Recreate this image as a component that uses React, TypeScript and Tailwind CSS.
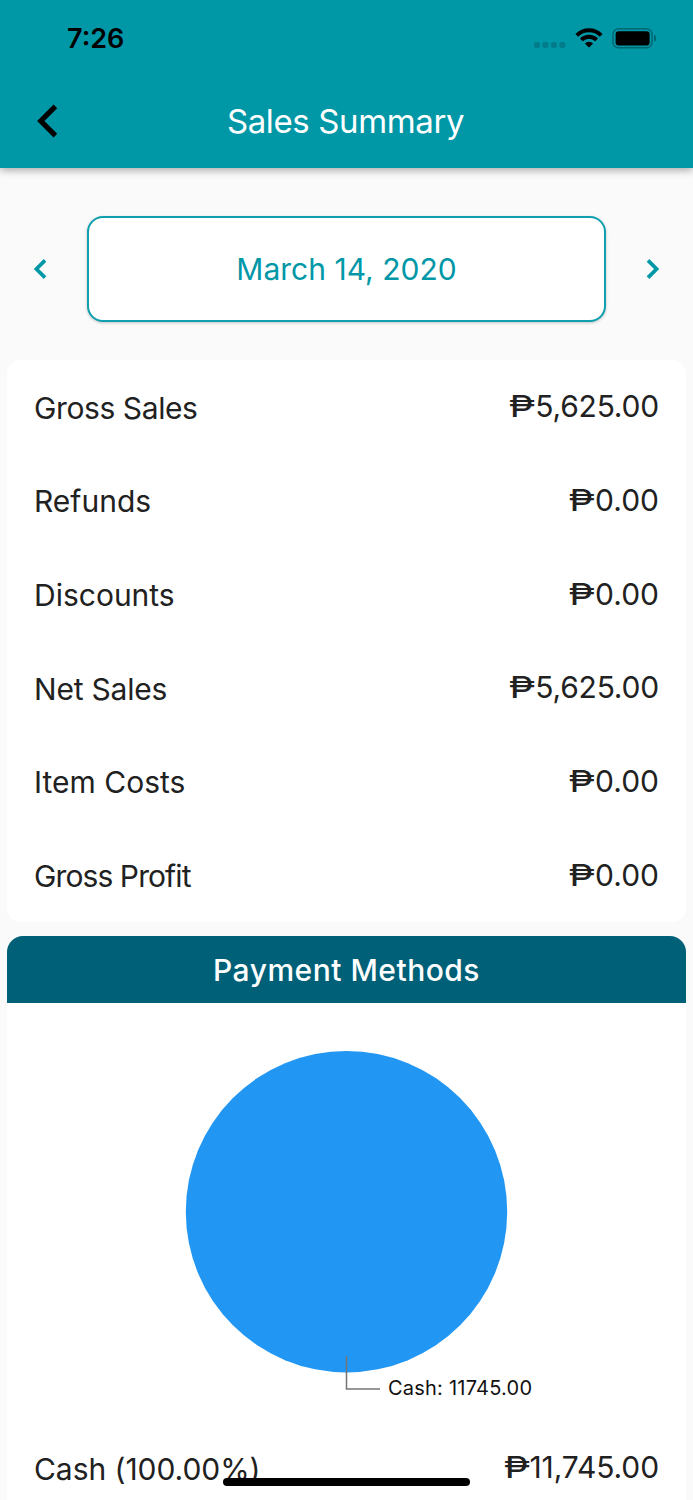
import { clsx } from 'clsx';

interface SummaryRow {
  label: string;
  amount: string;
  labelClass: string;
  amountClass: string;
}

const rows: SummaryRow[] = [
  { label: 'Gross Sales', amount: '5,625.00', labelClass: 'tracking-[-0.4px]', amountClass: 'tracking-[-0.2px]' },
  { label: 'Refunds', amount: '0.00', labelClass: 'tracking-[0px]', amountClass: 'tracking-[0px]' },
  { label: 'Discounts', amount: '0.00', labelClass: 'tracking-[0px]', amountClass: 'tracking-[0px]' },
  { label: 'Net Sales', amount: '5,625.00', labelClass: 'tracking-[-0.2px]', amountClass: 'tracking-[-0.2px]' },
  { label: 'Item Costs', amount: '0.00', labelClass: 'tracking-[0px]', amountClass: 'tracking-[0px]' },
  { label: 'Gross Profit', amount: '0.00', labelClass: 'tracking-[-0.9px]', amountClass: 'tracking-[0px]' },
];

const cashRow: SummaryRow = {
  label: 'Cash (100.00%)',
  amount: '11,745.00',
  labelClass: 'tracking-[-0.05px]',
  amountClass: 'tracking-[-0.1px]',
};

const StatusBar = () => (
  <div className="flex h-[76px] items-center justify-between pl-[67px] pr-[36px]">
    <span className="text-[27px] font-semibold leading-none text-black">7:26</span>
    <div className="flex items-center">
      <svg width="32" height="6" viewBox="0 0 32 6" className="mt-[14px] fill-[#007c8a]">
        <rect x="0" y="0" width="6" height="6" rx="2" />
        <rect x="8.5" y="0" width="6" height="6" rx="2" />
        <rect x="17" y="0" width="6" height="6" rx="2" />
        <rect x="25.3" y="0" width="6" height="6" rx="2" />
      </svg>
      <svg width="28" height="20" viewBox="0 0 28 20" className="ml-[9px]" fill="none" stroke="#000" strokeWidth="4">
        <path d="M1.8 7.3A17.3 17.3 0 0 1 26.2 7.3" />
        <path d="M6.4 11.9A10.8 10.8 0 0 1 21.6 11.9" />
        <path d="M14 19.5l-4.1-4.1a5.8 5.8 0 0 1 8.2 0z" fill="#000" stroke="none" />
      </svg>
      <svg width="45" height="21" viewBox="0 0 45 21" className="ml-[9px]">
        <rect x="1" y="0.8" width="39" height="19" rx="5.5" fill="none" stroke="#036773" strokeWidth="1.5" />
        <rect x="3.6" y="3.2" width="34" height="14.2" rx="3" fill="#000" />
        <path d="M42 6.7c3 1 3 6 0 7z" fill="#036773" />
      </svg>
    </div>
  </div>
);

const Header = () => (
  <header className="relative h-[167.5px] shrink-0 bg-[#0097a7] shadow-[0_2px_8px_rgba(0,0,0,0.35)]">
    <StatusBar />
    <div className="grid h-[90px] grid-cols-[100px_1fr_102px] items-center">
      <button type="button" aria-label="Back" className="pl-[37px]">
        <svg width="21" height="34" viewBox="0 0 21 34" fill="none" stroke="#000" strokeWidth="5.2">
          <path d="M18.4 2.4L3.8 17l14.6 14.6" />
        </svg>
      </button>
      <h1 className="whitespace-nowrap text-center text-[33px] leading-none tracking-[-0.38px] text-white">
        Sales Summary
      </h1>
    </div>
  </header>
);

const DatePicker = () => (
  <div className="mt-[48.5px] flex h-[105.5px] items-center justify-between px-[33px]">
    <button type="button" aria-label="Previous day">
      <svg width="14" height="22" viewBox="0 0 14 22" fill="none" stroke="#0097a7" strokeWidth="3.7">
        <path d="M12 2.4L3.4 11l8.6 8.6" />
      </svg>
    </button>
    <div className="flex h-[105.5px] w-[519px] items-center justify-center rounded-[16px] border-2 border-[#0f9fae] bg-white pt-[1px] text-[30px] tracking-[0.02px] text-[#0097a7] shadow-[0_1px_3px_rgba(0,0,0,0.22)]">
      March 14, 2020
    </div>
    <button type="button" aria-label="Next day">
      <svg width="14" height="22" viewBox="0 0 14 22" fill="none" stroke="#0097a7" strokeWidth="3.7">
        <path d="M2 2.4L10.6 11 2 19.6" />
      </svg>
    </button>
  </div>
);

const Row = ({ row }: { row: SummaryRow }) => (
  <div className="flex h-[93.67px] items-center justify-between px-[27px] text-[30px] text-[#212121]">
    <span className={clsx('whitespace-nowrap pt-[3px]', row.labelClass)}>{row.label}</span>
    <span className={clsx('whitespace-nowrap', row.amountClass)}>
      <span className="inline-block origin-right scale-x-[1.32]">₱</span>
      {row.amount}
    </span>
  </div>
);

const PaymentChart = () => (
  <svg width="679" height="418" viewBox="7 1003 679 418" className="block">
    <circle cx="346.5" cy="1211.7" r="160.7" fill="#2196f3" />
    <path d="M346.5 1356v33H380" fill="none" stroke="#757575" strokeWidth="1.5" />
    <text x="388" y="1394.5" fontSize="20" fill="#111111" textLength="144">Cash: 11745.00</text>
  </svg>
);

const App = () => {
  return (
    <div className="relative flex h-[1500px] w-[693px] flex-col overflow-hidden bg-[#fafafa] font-['Inter',sans-serif]">
      <Header />
      <DatePicker />

      <section className="mx-[7px] mt-[38.5px] rounded-[14px] bg-white">
        {rows.map(row => (
          <Row key={row.label} row={row} />
        ))}
      </section>

      <section className="mx-[7px] mt-[14px] rounded-t-[16px] bg-white">
        <h2 className="flex h-[67px] items-center justify-center rounded-t-[16px] bg-[#006078] text-[30px] font-medium text-white">
          <span className="pt-[2px] tracking-[0.5px]">Payment Methods</span>
        </h2>
        <PaymentChart />
        <Row row={cashRow} />
      </section>

      {/* Home indicator */}
      <div className="absolute bottom-[14px] left-[223px] h-[8px] w-[247px] rounded-full bg-black" />
    </div>
  );
};

export default App;
